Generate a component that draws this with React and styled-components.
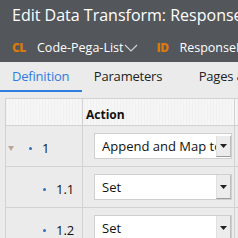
import React from "react";
import styled, { createGlobalStyle } from "styled-components";

const GlobalStyle = createGlobalStyle`
  body {
    margin: 0;
    background: #ebebeb;
    font-family: "Open Sans", "Liberation Sans", sans-serif;
    overflow: hidden;
  }
`;

const rows = [
  { id: "1", level: 0, action: "Append and Map to", toggle: true, narrow: true },
  { id: "1.1", level: 1, action: "Set" },
  { id: "1.2", level: 1, action: "Set" },
];

const App = () => {
  return (
    <Page>
      <GlobalStyle />
      <Header>
        <Title>Edit Data Transform: Response</Title>
        <Meta>
          <Badge>CL</Badge>
          <MetaText>Code-Pega-List</MetaText>
          <Chevron width="14" height="8" viewBox="0 0 14 8">
            <path d="M1 1 L7 7 L13 1" fill="none" stroke="#d4d5d7" strokeWidth="1.1" />
          </Chevron>
          <Badge spaced>ID</Badge>
          <MetaText>ResponseMapping</MetaText>
        </Meta>
      </Header>
      <Tabs>
        <Tab active>Definition</Tab>
        <Tab>Parameters</Tab>
        <Tab>Pages &amp; Classes</Tab>
      </Tabs>
      <Table>
        <HeadRow>
          <StepCell />
          <HeadCell>Action</HeadCell>
          <EdgeCell />
        </HeadRow>
        {rows.map((row) => (
          <Row key={row.id}>
            <StepCell>
              <Step level={row.level}>
                {row.toggle && (
                  <Toggle viewBox="0 0 6 5">
                    <path d="M0 0 L6 0 L3 5 Z" fill="#b9a79a" />
                  </Toggle>
                )}
                <Dot />
                <StepNum>{row.id}</StepNum>
              </Step>
            </StepCell>
            <ActionCell>
              <Select>
                <SelectValue>{row.action}</SelectValue>
                <SelectButton narrow={row.narrow}>
                  <svg width="7" height="4" viewBox="0 0 7 4">
                    <path d="M0 0 L7 0 L3.5 4 Z" fill="#222" />
                  </svg>
                </SelectButton>
              </Select>
            </ActionCell>
            <EdgeCell />
          </Row>
        ))}
      </Table>
    </Page>
  );
};

export default App;

const Page = styled.div`
  width: 238px;
  height: 238px;
  overflow: hidden;
  display: flex;
  flex-direction: column;
`;

const Header = styled.div`
  flex-shrink: 0;
  background: #53565b;
  height: 62px;
  padding: 3px 0 0 12px;
  box-sizing: border-box;
  white-space: nowrap;
  overflow: hidden;
`;

const Title = styled.div`
  color: #ffffff;
  font-size: 16px;
  line-height: 24px;
`;

const Meta = styled.div`
  display: flex;
  align-items: center;
  margin-top: 8px;
  height: 24px;
`;

const Badge = styled.span`
  flex-shrink: 0;
  display: inline-block;
  width: 15px;
  color: #d87a0c;
  font-weight: 800;
  font-size: 12px;
  letter-spacing: -0.5px;
  margin-left: ${(p) => (p.spaced ? "18px" : "0")};
  margin-right: ${(p) => (p.spaced ? "8px" : "10px")};
`;

const MetaText = styled.span`
  color: #ffffff;
  font-size: 12.5px;
`;

const Chevron = styled.svg`
  flex-shrink: 0;
  display: block;
  margin-left: 1px;
  margin-top: 1px;
`;

const Tabs = styled.div`
  flex-shrink: 0;
  display: flex;
  height: 30px;
  white-space: nowrap;
`;

const Tab = styled.div`
  font-size: 13px;
  letter-spacing: -0.2px;
  line-height: 28px;
  padding: 0 12.5px 0 12px;
  color: ${(p) => (p.active ? "#2f7de1" : "#222")};
  border-bottom: 2px solid ${(p) => (p.active ? "#2f7de1" : "transparent")};
  margin-right: ${(p) => (p.active ? "0" : "12px")};
`;

const Table = styled.div`
  flex-shrink: 0;
  margin: 6px 0 0 5px;
  border-top: 1px solid #d2d2d2;
  border-left: 1px solid #d2d2d2;
  display: flex;
  flex-direction: column;
`;

const HeadRow = styled.div`
  display: grid;
  grid-template-columns: 77px 152px 1fr;
  height: 26px;
  border-bottom: 1px solid #d2d2d2;
  background-color: #f6f6f6;
  background-image: repeating-linear-gradient(
    90deg,
    rgba(0, 0, 0, 0.025) 0 1px,
    transparent 1px 3px
  );
`;

const HeadCell = styled.div`
  font-weight: 700;
  font-size: 12px;
  color: #111;
  padding: 7px 0 0 3px;
  border-right: 1px solid #d2d2d2;
`;

const Row = styled.div`
  display: grid;
  grid-template-columns: 77px 152px 1fr;
  height: 40px;
  border-bottom: 1px solid #d2d2d2;
`;

const StepCell = styled.div`
  border-right: 1px solid #d2d2d2;
  display: flex;
  align-items: center;
`;

const EdgeCell = styled.div``;

const Step = styled.div`
  display: flex;
  align-items: center;
  margin-top: 4px;
  padding-left: ${(p) => (p.level ? "37px" : "2px")};
`;

const Toggle = styled.svg`
  width: 6px;
  height: 5px;
  margin-right: 15px;
`;

const Dot = styled.span`
  width: 3px;
  height: 3px;
  border-radius: 50%;
  background: #2f6fb3;
  margin-right: 10px;
`;

const StepNum = styled.span`
  font-size: 13px;
  color: #111;
`;

const ActionCell = styled.div`
  border-right: 1px solid #d2d2d2;
  display: flex;
  align-items: center;
  padding-left: 11px;
`;

const Select = styled.div`
  width: 138px;
  height: 26px;
  box-sizing: border-box;
  background: #ffffff;
  border: 1px solid #cfcfcf;
  display: flex;
  align-items: stretch;
  overflow: hidden;
`;

const SelectValue = styled.div`
  flex: 1;
  font-size: 13px;
  line-height: 24px;
  padding-left: 7px;
  color: #111;
  white-space: nowrap;
  overflow: hidden;
`;

const SelectButton = styled.div`
  width: 15px;
  display: flex;
  align-items: center;
  justify-content: center;
  background: #ececec;
  border-left: 1px solid #e0e0e0;
  border-bottom: 1px solid #9a9a9a;
  border-right: 1px solid #bdbdbd;
  box-sizing: border-box;
  margin: ${(p) => (p.narrow ? "2px 0 1px 0" : "0")};
`;
